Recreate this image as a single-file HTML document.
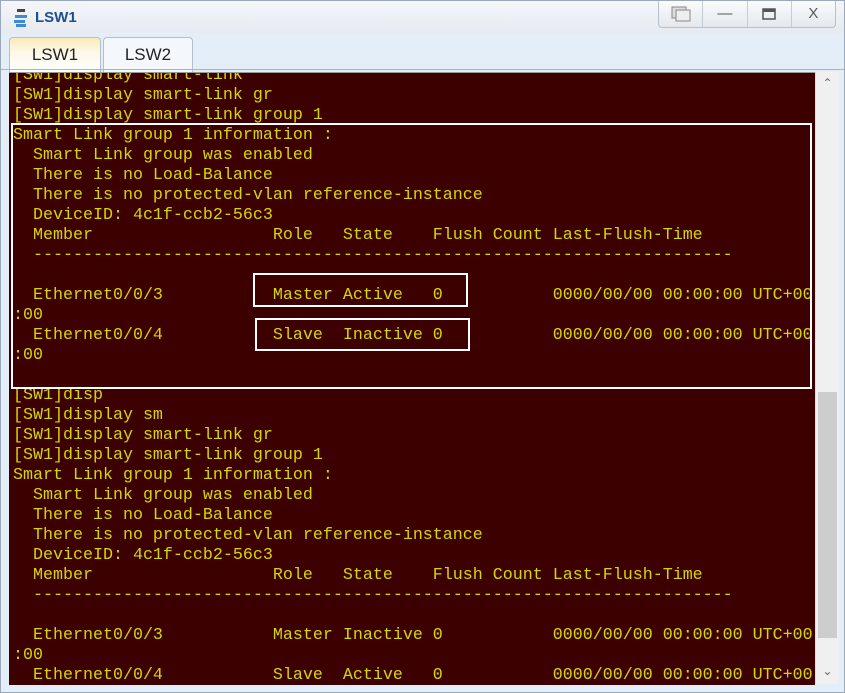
<!DOCTYPE html>
<html><head><style>
html,body{margin:0;padding:0;width:845px;height:693px;overflow:hidden;background:#dfe9f5;font-family:"Liberation Sans",sans-serif}
.win{position:absolute;left:0;top:0;width:843px;height:691px;border:1px solid #9aa8b8;background:#e3eef9}
.title{position:absolute;left:0;top:0;width:843px;height:32px;background:linear-gradient(#f4f6f9,#e6ebf1)}
.title span{position:absolute;left:34px;top:8px;font-size:15px;font-weight:bold;color:#1d4f91}
.btns{position:absolute;left:657px;top:0;width:176px;height:26px;border:1px solid #b8c2cc;border-top:none;border-radius:0 0 4px 4px;background:linear-gradient(#fafbfc,#e4e8ee);display:flex}
.btns div{flex:1;border-right:1px solid #c5ccd4;position:relative;color:#555;font-size:15px;text-align:center;line-height:26px}
.btns div:last-child{border-right:none}
.tab{position:absolute;top:36px;height:34px;border:1px solid #b3bfcc;border-bottom:none;border-radius:4px 4px 0 0;font-size:17px;text-align:center;line-height:34px;color:#222}
.term{position:absolute;left:9px;top:72px;width:806px;height:612px;background:#3c0000;overflow:hidden;border-top:1px solid #999}
pre{margin:0;position:absolute;left:4px;top:-7px;font-family:"Liberation Mono",monospace;font-size:16.67px;line-height:20px;color:#d6d600}
.box{position:absolute;border:2px solid #fff}
.sb{position:absolute;left:815px;top:72px;width:23px;height:612px;background:#f0f0f0;border-left:1px solid #ddd}
.thumb{position:absolute;left:2px;top:320px;width:19px;height:246px;background:#cdcdcd}
</style></head><body>
<div class="win">
<div class="title">
<svg style="position:absolute;left:11px;top:8px" width="18" height="18" viewBox="0 0 18 18"><rect x="5" y="0" width="8" height="3" fill="#444"/><path d="M3 6h12v3H3zM2 11h11v3H2zM4 15h10v3H4z" fill="#3d8ad6"/></svg>
<span>LSW1</span>
<div class="btns"><div><svg width="22" height="18" style="margin-top:4px"><rect x="2" y="2" width="14" height="11" fill="#ddd" stroke="#888"/><rect x="6" y="5" width="14" height="11" fill="#eee" stroke="#888"/></svg></div><div>—</div><div><svg width="14" height="12" style="margin-top:7px"><rect x="1" y="1" width="12" height="10" fill="none" stroke="#555" stroke-width="1.5"/><rect x="1" y="1" width="12" height="3" fill="#555"/></svg></div><div>X</div></div>
</div>
<div class="tab" style="left:8px;width:90px;background:linear-gradient(#fbe9b8,#fdf7e6 40%,#fff)">LSW1</div>
<div class="tab" style="left:102px;width:88px;background:#f4f7fb">LSW2</div>
<div style="position:absolute;left:0;top:68px;width:843px;height:1px;background:#aab4c0"></div>
</div>
<div class="term"><pre>[SW1]display smart-link
[SW1]display smart-link gr
[SW1]display smart-link group 1
Smart Link group 1 information :
  Smart Link group was enabled
  There is no Load-Balance
  There is no protected-vlan reference-instance
  DeviceID: 4c1f-ccb2-56c3
  Member                  Role   State    Flush Count Last-Flush-Time
  ----------------------------------------------------------------------

  Ethernet0/0/3           Master Active   0           0000/00/00 00:00:00 UTC+00
:00
  Ethernet0/0/4           Slave  Inactive 0           0000/00/00 00:00:00 UTC+00
:00

[SW1]disp
[SW1]display sm
[SW1]display smart-link gr
[SW1]display smart-link group 1
Smart Link group 1 information :
  Smart Link group was enabled
  There is no Load-Balance
  There is no protected-vlan reference-instance
  DeviceID: 4c1f-ccb2-56c3
  Member                  Role   State    Flush Count Last-Flush-Time
  ----------------------------------------------------------------------

  Ethernet0/0/3           Master Inactive 0           0000/00/00 00:00:00 UTC+00
:00
  Ethernet0/0/4           Slave  Active   0           0000/00/00 00:00:00 UTC+00
</pre>
<div class="box" style="left:2px;top:50px;width:797px;height:262px"></div>
<div class="box" style="left:244px;top:200px;width:211px;height:30px"></div>
<div class="box" style="left:246px;top:245px;width:211px;height:29px"></div>
</div>
<div class="sb"><div style="position:absolute;top:4px;width:23px;text-align:center;font-size:12px;color:#666">&#8963;</div><div class="thumb"></div><div style="position:absolute;top:592px;width:23px;text-align:center;font-size:12px;color:#666">&#8964;</div></div>
</body></html>
